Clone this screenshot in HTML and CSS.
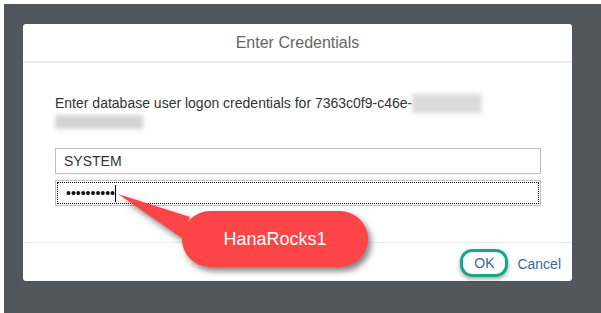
FILE: index.html
```html
<!DOCTYPE html>
<html>
<head>
<meta charset="utf-8">
<link rel="stylesheet" href="styles.css">
</head>
<body>
<div class="stage">
  <div class="dialog">
    <div class="header">Enter Credentials</div>
    <div class="body">
      <p class="msg">Enter database user logon credentials for 7363c0f9-c46e-<span class="blur b1"></span><span class="blur b2"></span></p>
      <div class="field">SYSTEM</div>
      <div class="field pw"><div class="focus"><span class="dots">••••••••••</span><span class="caret"></span></div></div>
    </div>
    <div class="footer">
      <button class="btn ok">OK</button>
      <button class="btn cancel">Cancel</button>
    </div>
    <div class="callout">
      <svg class="bubble" width="270" height="95" viewBox="0 0 270 95">
        <path d="M8 9 L80 32 L72 53 Z" fill="#fd4447"/>
        <rect x="72" y="26" width="186" height="56" rx="28" ry="28" fill="#fd4447"/>
      </svg>
      <span class="callout-text">HanaRocks1</span>
    </div>
  </div>
</div>
</body>
</html>
```

FILE: styles.css
```css
html, body {
  margin: 0;
  padding: 0;
  background: #ffffff;
}
body {
  font-family: "Liberation Sans", Arial, sans-serif;
}
.stage {
  margin: 4px 0 0 4px;
  width: 597px;
  height: 309px;
  background: #52575d;
  padding: 20px 0 0 19px;
  box-sizing: border-box;
}
.dialog {
  position: relative;
  width: 549px;
  height: 257px;
  background: #ffffff;
  border-radius: 3px;
  display: flex;
  flex-direction: column;
}
.header {
  height: 37px;
  line-height: 38px;
  text-align: center;
  font-size: 16px;
  color: #666666;
  border-bottom: 2px solid #ececec;
  flex: none;
}
.body {
  flex: 1;
  padding: 32px 31px 0 32px;
  border-bottom: 1px solid #ececec;
}
.msg {
  margin: 0;
  font-size: 14px;
  line-height: 17px;
  color: #333333;
  width: 486px;
}
.blur {
  display: inline-block;
  background: #d6d6d6;
  filter: blur(2px);
  vertical-align: top;
}
.b1 {
  width: 70px;
  height: 19px;
  margin-top: -1px;
  background: #dcdcdc;
}
.b2 {
  width: 88px;
  height: 14px;
  margin-top: 2px;
  background: #d4d4d4;
}
.field {
  margin-top: 18px;
  height: 24px;
  border: 1px solid #bfbfbf;
  font-size: 14px;
  color: #333333;
  line-height: 24px;
  padding-left: 8px;
}
.field.pw {
  margin-top: 6px;
  padding: 1px;
  height: 22px;
}
.focus {
  height: 20px;
  border: 1px dotted #000000;
  display: flex;
  align-items: center;
  padding-left: 8px;
}
.dots {
  font-size: 14px;
  color: #111111;
  letter-spacing: 0;
  line-height: 20px;
}
.caret {
  display: inline-block;
  width: 1px;
  height: 17px;
  background: #000000;
  margin-left: 0;
}
.footer {
  height: 38px;
  display: flex;
  justify-content: flex-end;
  align-items: center;
  gap: 9px;
  padding-right: 11px;
  flex: none;
}
.btn {
  font-family: "Liberation Sans", Arial, sans-serif;
  font-size: 14px;
  background: none;
  border: none;
  padding: 0;
  color: #3e6a90;
  cursor: pointer;
}
.ok {
  width: 48px;
  height: 28px;
  border: 3px solid #17a68a;
  border-radius: 12px;
  box-shadow: 0 2px 4px rgba(0, 0, 0, 0.35);
  margin-top: 1px;
}
.cancel {
  margin-top: 3px;
}
.callout {
  position: absolute;
  left: 87px;
  top: 161px;
  width: 270px;
  height: 95px;
}
.bubble {
  display: block;
  filter: drop-shadow(3px 4px 3px rgba(0, 0, 0, 0.5));
}
.callout-text {
  position: absolute;
  left: 72px;
  top: 26px;
  width: 186px;
  height: 56px;
  display: flex;
  align-items: center;
  justify-content: center;
  color: #ffffff;
  font-size: 18px;
}
```
